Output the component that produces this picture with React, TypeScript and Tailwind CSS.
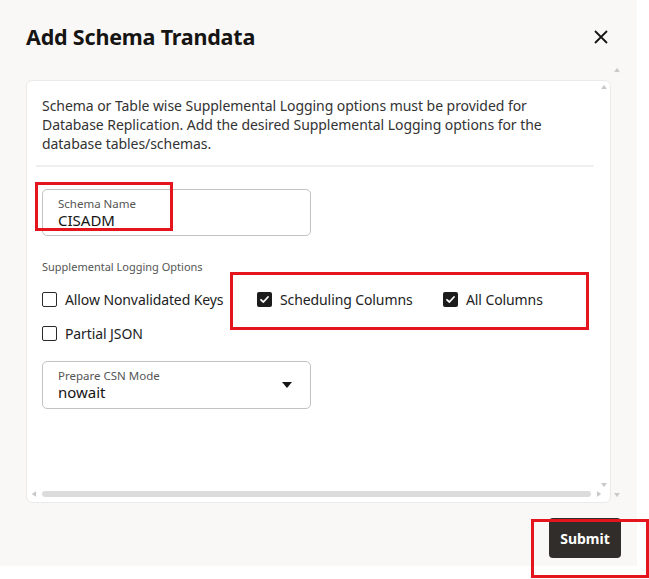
import React from "react";

const font = { fontFamily: '"Noto Sans", "Open Sans", sans-serif' };

function Tri({ dir, className }: { dir: "up" | "down" | "left" | "right"; className?: string }) {
  const pts =
    dir === "up" ? "0,6 4,0 8,6" : dir === "down" ? "0,0 8,0 4,6" : dir === "left" ? "6,0 6,8 0,4" : "0,0 0,8 6,4";
  const w = dir === "up" || dir === "down" ? 8 : 6;
  const h = dir === "up" || dir === "down" ? 6 : 8;
  return (
    <svg width={w} height={h} viewBox={`0 0 ${w} ${h}`} className={className}>
      <polygon points={pts} fill="#c9c9c9" />
    </svg>
  );
}

function Check({ checked, label }: { checked?: boolean; label: string }) {
  return (
    <div className="flex items-center gap-[8px]">
      {checked ? (
        <span className="w-[15px] h-[15px] rounded-[2px] bg-[#1c1c1c] flex items-center justify-center">
          <svg width="11" height="11" viewBox="0 0 11 11">
            <path d="M2 5.8 L4.4 8 L9 3" stroke="white" strokeWidth="1.8" fill="none" strokeLinecap="round" strokeLinejoin="round" />
          </svg>
        </span>
      ) : (
        <span className="w-[15px] h-[15px] rounded-[2px] border-[1.5px] border-[#2a2a2a] bg-white" />
      )}
      <span className="text-[14px] text-[#222] tracking-[-0.1px]">{label}</span>
    </div>
  );
}

export default function App() {
  return (
    <div className="w-[649px] h-[579px] bg-white relative overflow-hidden" style={font}>
      <div className="w-[637px] h-[566px] bg-[#f9f8f7] flex flex-col">
        <div className="flex items-center justify-between pl-[26px] pr-[28px] pt-[17px] h-[58px]">
          <h1 className="text-[21.5px] font-bold text-[#161513] tracking-[-0.2px]">Add Schema Trandata</h1>
          <svg width="14" height="14" viewBox="0 0 14 14" className="mr-[1px] mb-[1px]">
            <path d="M1 1 L13 13 M13 1 L1 13" stroke="#161513" strokeWidth="1.8" />
          </svg>
        </div>
        <div className="flex pl-[26px] pt-[22px]">
          <div className="w-[585px] h-[423px] bg-white rounded-[6px] border border-[#ebeae8] relative flex flex-col">
            <div className="flex-1 flex flex-col pl-[15px] pr-[16px] pt-[15px]">
              <p className="text-[14px] leading-[19px] text-[#333] w-[540px] tracking-[-0.05px]">
                Schema or Table wise Supplemental Logging options must be provided for Database Replication. Add the desired Supplemental Logging options for the database tables/schemas.
              </p>
              <div className="h-[2px] bg-[#f0efee] ml-[-6px] mt-[12px] rounded" />
              <div className="mt-[22px] w-[269px] h-[47px] rounded-[5px] border border-[#c4c3c1] flex flex-col justify-center pl-[15px] pt-[1px]">
                <span className="text-[11.5px] leading-[14px] text-[#555]">Schema Name</span>
                <span className="text-[15px] leading-[19px] text-[#161513]">CISADM</span>
              </div>
              <div className="mt-[24px] text-[11px] text-[#555] leading-[14px]">Supplemental Logging Options</div>
              <div className="mt-[15px] flex items-center h-[20px]">
                <div className="w-[215px]"><Check label="Allow Nonvalidated Keys" /></div>
                <div className="w-[186px]"><Check checked label="Scheduling Columns" /></div>
                <Check checked label="All Columns" />
              </div>
              <div className="mt-[14px] flex items-center h-[20px]">
                <Check label="Partial JSON" />
              </div>
              <div className="mt-[18px] w-[269px] h-[48px] rounded-[5px] border border-[#c4c3c1] flex items-center pl-[15px] pr-[18px]">
                <div className="flex-1 flex flex-col pt-[1px]">
                  <span className="text-[11.5px] leading-[14px] text-[#555]">Prepare CSN Mode</span>
                  <span className="text-[15px] leading-[19px] text-[#161513]">nowait</span>
                </div>
                <svg width="10" height="6" viewBox="0 0 10 6"><polygon points="0,0 10,0 5,6" fill="#161513" /></svg>
              </div>
            </div>
            <div className="flex items-center h-[12px] pl-[4px] pr-[8px] mb-[2px]">
              <Tri dir="left" className="scale-75" />
              <div className="flex-1 h-[6px] rounded-full bg-[#dcdcdc] mx-[5px]" />
              <Tri dir="right" className="scale-75" />
            </div>
            <Tri dir="up" className="absolute right-[2px] top-[3px] scale-75" />
            <Tri dir="down" className="absolute right-[2px] bottom-[14px] scale-75" />
          </div>
          <div className="flex flex-col justify-between ml-[2px] mt-[-13px] h-[431px]">
            <Tri dir="up" className="scale-75" />
            <Tri dir="down" className="scale-75" />
          </div>
        </div>
        <div className="flex justify-end pr-[16px] mt-[15px]">
          <button className="w-[72px] h-[40px] rounded-[4px] bg-[#312d2a] text-white text-[14px] font-bold">Submit</button>
        </div>
      </div>
      <div className="absolute left-[35px] top-[182px] w-[138px] h-[49px] border-[3px] border-[#e4151c]" />
      <div className="absolute left-[230px] top-[272px] w-[359px] h-[58px] border-[3px] border-[#e4151c]" />
      <div className="absolute left-[531px] top-[519px] w-[118px] h-[59px] border-[3px] border-[#e4151c]" />
    </div>
  );
}
